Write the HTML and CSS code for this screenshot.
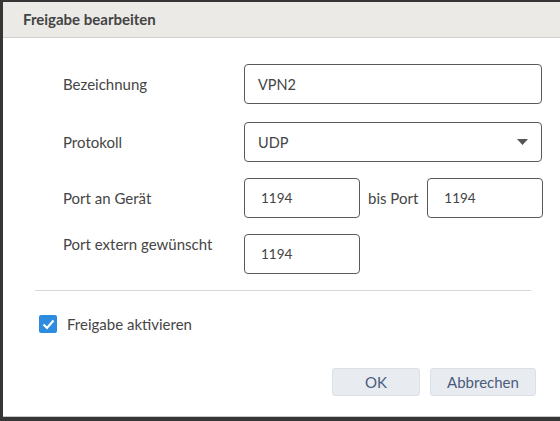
FILE: index.html
```html
<!DOCTYPE html>
<html lang="de">
<head>
<meta charset="utf-8">
<title>Freigabe bearbeiten</title>
<link rel="stylesheet" href="styles.css">
</head>
<body>
<div class="dialog">
  <div class="header">Freigabe bearbeiten</div>
  <div class="content">
    <div class="form">
      <div class="label">Bezeichnung</div>
      <div class="field"><div class="input wide">VPN2</div></div>

      <div class="label">Protokoll</div>
      <div class="field">
        <div class="input wide select">UDP
          <svg class="caret" width="11" height="6" viewBox="0 0 11 6"><path d="M0 0h11L5.5 6z" fill="#555"/></svg>
        </div>
      </div>

      <div class="label">Port an Gerät</div>
      <div class="field">
        <div class="input small">1194</div>
        <span class="bis">bis Port</span>
        <div class="input small">1194</div>
      </div>

      <div class="label top">Port extern gewünscht</div>
      <div class="field"><div class="input small">1194</div></div>
    </div>
    <div class="divider"></div>
    <label class="check">
      <span class="box"><svg width="13" height="11" viewBox="0 0 13 11"><path d="M1.5 5.5l3.5 3.5 6.5-7.5" fill="none" stroke="#fff" stroke-width="2.2"/></svg></span>
      Freigabe aktivieren
    </label>
    <div class="buttons">
      <button class="btn ok">OK</button>
      <button class="btn cancel">Abbrechen</button>
    </div>
  </div>
</div>
</body>
</html>
```
FILE: styles.css
```css
html, body {
  margin: 0;
  padding: 0;
}
body {
  background: #363636;
  font-family: "Lato", "Open Sans", sans-serif;
  color: #454545;
  height: 421px;
  overflow: hidden;
}
.dialog {
  margin: 2px 0 0 3px;
  height: 414px;
  background: #fff;
  border-bottom: 1px solid #c8c8c8;
  display: flex;
  flex-direction: column;
}
.header {
  height: 36px;
  box-sizing: border-box;
  background: #ebeae6;
  border-bottom: 1px solid #d0d0cc;
  padding: 8px 0 0 20px;
  font-weight: bold;
  font-size: 15px;
  color: #444;
}
.content {
  padding: 28px 0 0 0;
  flex: 1;
  display: flex;
  flex-direction: column;
}
.form {
  display: grid;
  grid-template-columns: 181px 1fr;
  grid-template-rows: 40px 40px 40px 40px;
  row-gap: 16px;
  padding-left: 60px;
  padding-right: 15px;
}
.form > :nth-child(1), .form > :nth-child(2) { margin-bottom: 4px; }
.label {
  font-size: 15px;
  align-self: center;
}
.label.top {
  align-self: start;
  padding-top: 1px;
}
.field {
  display: flex;
  align-items: center;
}
.input {
  box-sizing: border-box;
  height: 40px;
  border: 1px solid #5a5a5a;
  border-radius: 4px;
  padding: 0 0 0 13px;
  font-size: 14.5px;
  display: flex;
  align-items: center;
  color: #444;
}
.input.wide { width: 298px; }
.input.select { justify-content: space-between; padding-right: 13px; }
.input.small { width: 116px; padding-left: 16px; font-size: 13.5px; }
.bis {
  font-size: 15px;
  margin: 0 9px 0 8px;
}
.divider {
  margin: 16px 29px 0 32px;
  border-top: 1px solid #d6d6d6;
}
.check {
  display: flex;
  align-items: center;
  margin: 24px 0 0 36px;
  font-size: 15px;
}
.box {
  width: 18px;
  height: 18px;
  background: #2d8be0;
  border-radius: 2px;
  display: flex;
  align-items: center;
  justify-content: center;
  margin-right: 10px;
}
.buttons {
  display: flex;
  justify-content: flex-end;
  gap: 10px;
  margin: 35px 24px 0 0;
}
.btn {
  height: 28px;
  box-sizing: border-box;
  background: #e8ecf0;
  border: 1px solid #dbe0e6;
  border-radius: 3px;
  color: #4b5b7c;
  font-family: "Lato", "Open Sans", sans-serif;
  font-size: 15px;
  padding: 0;
}
.btn.ok { width: 88px; }
.btn.cancel { width: 106px; }
```
